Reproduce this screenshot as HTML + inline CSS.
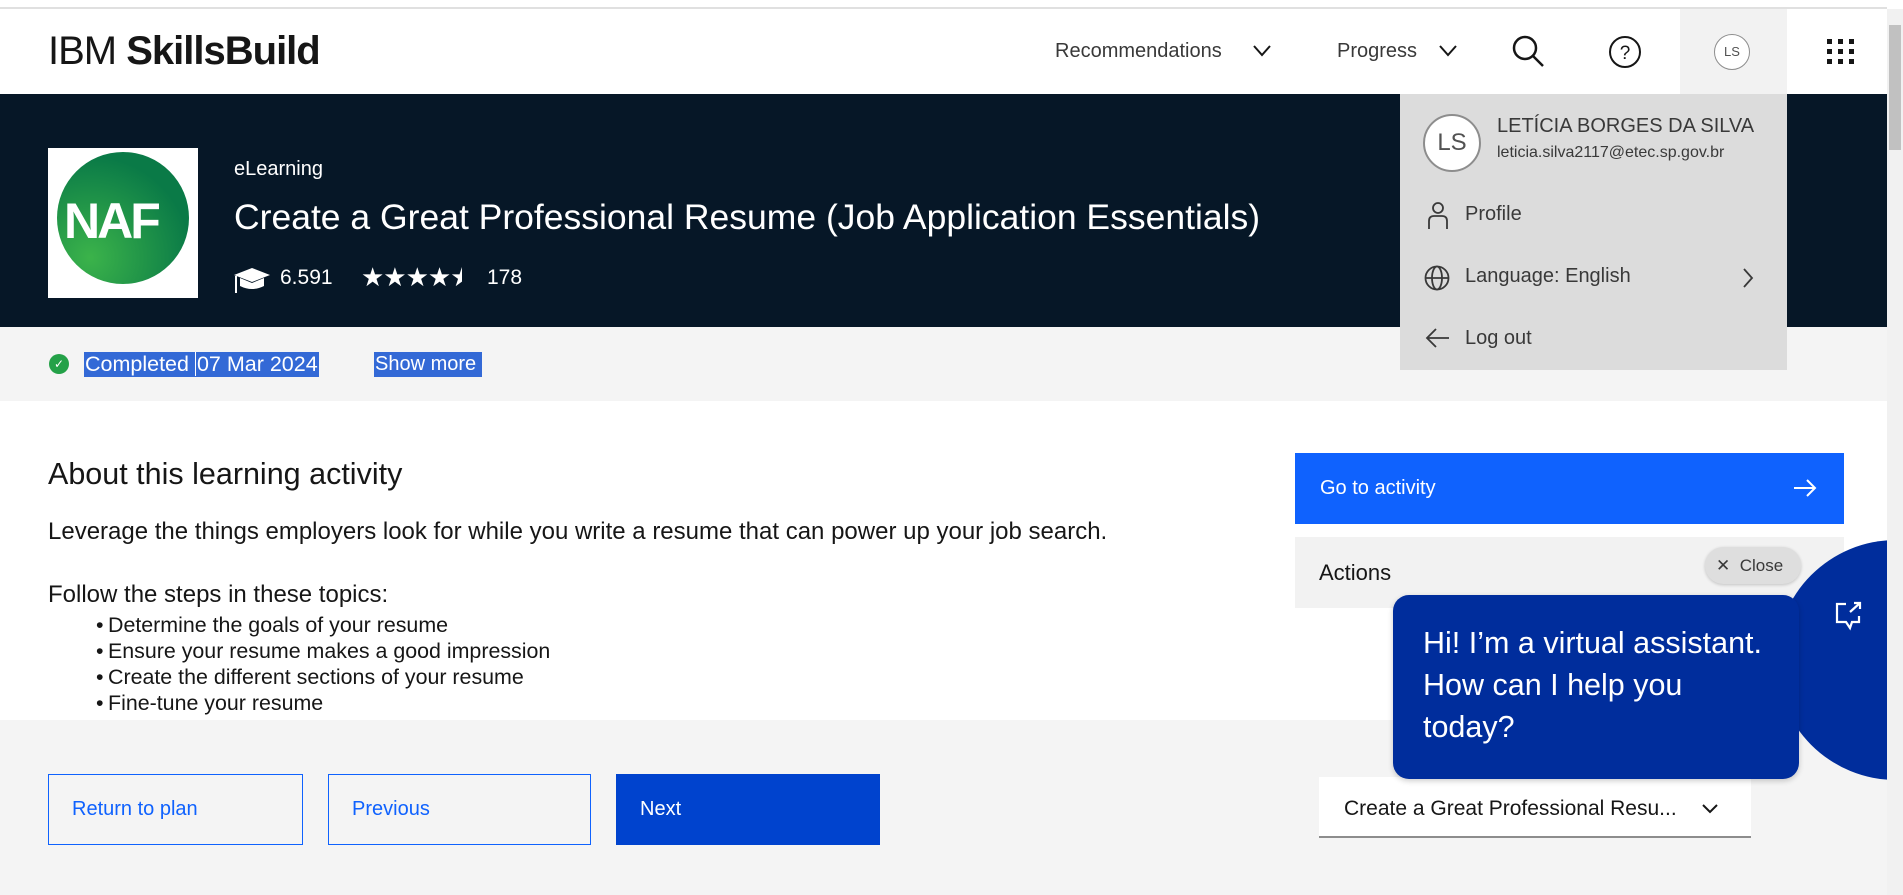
<!DOCTYPE html>
<html><head><meta charset="utf-8"><style>
*{margin:0;padding:0;box-sizing:border-box}
body{width:1903px;height:895px;overflow:hidden;position:relative;background:#fff;font-family:"Liberation Sans",Arial,sans-serif;color:#161616}
.a{position:absolute}
.t{position:absolute;white-space:nowrap}
li{list-style:none;position:relative;padding-left:12px}
li:before{content:"•";position:absolute;left:0}
</style></head><body>
<div class="a" style="left:0;top:0;width:1887px;height:9px;background:#fff;border-bottom:2px solid #e0e0e0"></div>
<!-- header -->
<div class="a" style="left:0;top:9px;width:1887px;height:85px;background:#fff"></div>
<div class="t" style="left:48px;top:29px;font-size:40px;letter-spacing:-1px"><span style="font-weight:400">IBM </span><b>SkillsBuild</b></div>
<div class="t" style="left:1055px;top:40px;font-size:20px;color:#393939">Recommendations</div>
<svg class="a" style="left:1252px;top:44px" width="20" height="14" viewBox="0 0 20 14"><path d="M2 2 L10 11 L18 2" fill="none" stroke="#161616" stroke-width="2"/></svg>
<div class="t" style="left:1337px;top:40px;font-size:20px;color:#393939">Progress</div>
<svg class="a" style="left:1438px;top:44px" width="20" height="14" viewBox="0 0 20 14"><path d="M2 2 L10 11 L18 2" fill="none" stroke="#161616" stroke-width="2"/></svg>
<svg class="a" style="left:1512px;top:35px" width="34" height="34" viewBox="0 0 34 34"><circle cx="13" cy="13" r="11" fill="none" stroke="#161616" stroke-width="2.5"/><path d="M21 21 L31 31" stroke="#161616" stroke-width="2.5"/></svg>
<svg class="a" style="left:1608px;top:35px" width="34" height="34" viewBox="0 0 34 34"><circle cx="17" cy="17" r="15" fill="none" stroke="#161616" stroke-width="2"/><text x="17" y="24" font-size="19" text-anchor="middle" font-family="Liberation Sans" fill="#161616">?</text></svg>
<div class="a" style="left:1680px;top:9px;width:107px;height:85px;background:#f2f2f2"></div>
<div class="a" style="left:1714px;top:34px;width:36px;height:36px;border:1.5px solid #8d8d8d;border-radius:50%;background:#fff;font-size:13px;color:#525252;text-align:center;line-height:33px">LS</div>
<svg class="a" style="left:1825px;top:37px" width="32" height="30" viewBox="0 0 32 30"><g fill="#161616"><rect x="2" y="2" width="5" height="5"/><rect x="13" y="2" width="5" height="5"/><rect x="24" y="2" width="5" height="5"/><rect x="2" y="12" width="5" height="5"/><rect x="13" y="12" width="5" height="5"/><rect x="24" y="12" width="5" height="5"/><rect x="2" y="22" width="5" height="5"/><rect x="13" y="22" width="5" height="5"/><rect x="24" y="22" width="5" height="5"/></g></svg>
<!-- hero -->
<div class="a" style="left:0;top:94px;width:1887px;height:233px;background:#061727"></div>
<div class="a" style="left:48px;top:148px;width:150px;height:150px;background:#fff"></div>
<div class="a" style="left:57px;top:152px;width:132px;height:132px;border-radius:50%;background:radial-gradient(circle at 25% 80%,#3bb34a,#0a7a47 70%)"></div>
<div class="t" style="left:64px;top:192px;font-size:50px;font-weight:bold;color:#fff;letter-spacing:-3px">NAF</div>
<div class="t" style="left:234px;top:158px;font-size:20px;color:#fff">eLearning</div>
<div class="t" style="left:234px;top:197px;font-size:35.5px;color:#fff">Create a Great Professional Resume (Job Application Essentials)</div>
<svg class="a" style="left:232px;top:265px" width="40" height="30" viewBox="0 0 40 30"><path d="M2 10 L20 3 L38 10 L20 17 Z" fill="#fff"/><path d="M8 13 V21 Q20 27 32 21 V13 L20 18 Z" fill="#fff"/><path d="M4 11 V28" stroke="#fff" stroke-width="2"/></svg>
<div class="t" style="left:280px;top:266px;font-size:21px;color:#fff">6.591</div>
<div class="t" style="left:361px;top:262px;font-size:26px;color:#fff;letter-spacing:-1px">★★★★<span style="display:inline-block;width:12px;overflow:hidden;vertical-align:top">★</span></div>
<div class="t" style="left:487px;top:266px;font-size:21px;color:#fff">178</div>
<!-- status strip -->
<div class="a" style="left:0;top:327px;width:1887px;height:74px;background:#f4f4f4"></div>
<div class="a" style="left:49px;top:354px;width:20px;height:20px;border-radius:50%;background:#24a148;color:#fff;font-size:12px;text-align:center;line-height:20px">✓</div>
<div class="t" style="left:84px;top:352px;height:25px;background:#3369d6;color:#fff;font-size:21.5px;line-height:25px;padding:0 1px">Completed <span style="border-left:1px solid #fff;padding-left:1px">07 Mar 2024</span></div>
<div class="t" style="left:374px;top:352px;width:108px;height:25px;background:#3369d6;color:#fff;font-size:20px;line-height:25px;padding-left:1px">Show more</div>
<!-- content -->
<div class="t" style="left:48px;top:457px;font-size:30.5px">About this learning activity</div>
<div class="t" style="left:48px;top:518px;font-size:24px">Leverage the things employers look for while you write a resume that can power up your job search.</div>
<div class="t" style="left:48px;top:581px;font-size:24px">Follow the steps in these topics:</div>
<ul class="a" style="left:96px;top:612px;font-size:21.4px;line-height:26px;white-space:nowrap">
<li>Determine the goals of your resume</li>
<li>Ensure your resume makes a good impression</li>
<li>Create the different sections of your resume</li>
<li>Fine-tune your resume</li>
</ul>
<div class="a" style="left:1295px;top:453px;width:549px;height:71px;background:#0f62fe"></div>
<div class="t" style="left:1320px;top:477px;font-size:20px;color:#fff">Go to activity</div>
<svg class="a" style="left:1792px;top:478px" width="26" height="20" viewBox="0 0 26 20"><path d="M2 10 H23 M15 2 L23 10 L15 18" fill="none" stroke="#fff" stroke-width="2"/></svg>
<div class="a" style="left:1295px;top:537px;width:549px;height:71px;background:#f2f2f2"></div>
<div class="t" style="left:1319px;top:560px;font-size:22px">Actions</div>
<!-- bottom -->
<div class="a" style="left:0;top:720px;width:1887px;height:175px;background:#f4f4f4"></div>
<div class="a" style="left:48px;top:774px;width:255px;height:71px;border:1px solid #0f62fe;color:#0f62fe;font-size:20px;line-height:69px;padding-left:23px">Return to plan</div>
<div class="a" style="left:328px;top:774px;width:263px;height:71px;border:1px solid #0f62fe;color:#0f62fe;font-size:20px;line-height:69px;padding-left:23px">Previous</div>
<div class="a" style="left:616px;top:774px;width:264px;height:71px;background:#0043ce;color:#fff;font-size:20px;line-height:71px;padding-left:24px">Next</div>
<div class="a" style="left:1319px;top:777px;width:432px;height:61px;background:#fff;border-bottom:2px solid #8d8d8d"></div>
<div class="t" style="left:1344px;top:797px;font-size:21px">Create a Great Professional Resu...</div>
<svg class="a" style="left:1701px;top:803px" width="18" height="12" viewBox="0 0 18 12"><path d="M2 2 L9 9 L16 2" fill="none" stroke="#161616" stroke-width="2"/></svg>
<!-- chat -->
<div class="a" style="left:1776px;top:540px;width:240px;height:240px;border-radius:50%;background:#002d9c;clip-path:inset(0 129px 0 0)"></div>
<svg class="a" style="left:1834px;top:600px" width="30" height="32" viewBox="0 0 30 32"><path d="M12 4 H3 V22 H12 L16 28 L18 22 H25 V16" fill="none" stroke="#fff" stroke-width="2.2"/><path d="M16 12 L26 3 M20 3 H26 V9" fill="none" stroke="#fff" stroke-width="2.2"/></svg>
<div class="a" style="left:1393px;top:595px;width:406px;height:184px;background:#002d9c;border-radius:16px;box-shadow:0 2px 6px rgba(0,0,0,.2)"></div>
<div class="a" style="left:1423px;top:622px;font-size:30.5px;line-height:42px;color:#fff;white-space:nowrap">Hi! I’m a virtual assistant.<br>How can I help you<br>today?</div>
<div class="a" style="left:1705px;top:547px;width:96px;height:37px;background:#dedede;border-radius:19px;box-shadow:0 1px 3px rgba(0,0,0,.2);font-size:17px;color:#393939;line-height:37px;padding-left:11px">✕&nbsp; Close</div>
<!-- dropdown -->
<div class="a" style="left:1400px;top:94px;width:387px;height:276px;background:#dcdcdc"></div>
<div class="a" style="left:1423px;top:114px;width:58px;height:58px;border:2px solid #8d8d8d;border-radius:50%;background:#fff;font-size:24px;color:#525252;text-align:center;line-height:54px">LS</div>
<div class="t" style="left:1497px;top:115px;font-size:20px;color:#393939">LETÍCIA BORGES DA SILVA</div>
<div class="t" style="left:1497px;top:144px;font-size:16px;color:#393939">leticia.silva2117@etec.sp.gov.br</div>
<svg class="a" style="left:1427px;top:201px" width="22" height="30" viewBox="0 0 22 30"><circle cx="11" cy="7" r="5" fill="none" stroke="#393939" stroke-width="1.8"/><path d="M2 28 V20 Q2 15 7 15 H15 Q20 15 20 20 V28" fill="none" stroke="#393939" stroke-width="1.8"/></svg>
<div class="t" style="left:1465px;top:203px;font-size:20px;color:#393939">Profile</div>
<svg class="a" style="left:1424px;top:265px" width="26" height="26" viewBox="0 0 26 26"><g fill="none" stroke="#393939" stroke-width="1.8"><circle cx="13" cy="13" r="11.5"/><ellipse cx="13" cy="13" rx="5" ry="11.5"/><path d="M1.5 13 H24.5"/></g></svg>
<div class="t" style="left:1465px;top:265px;font-size:20px;color:#393939">Language: English</div>
<svg class="a" style="left:1741px;top:267px" width="14" height="22" viewBox="0 0 14 22"><path d="M3 2 L11 11 L3 20" fill="none" stroke="#393939" stroke-width="1.8"/></svg>
<svg class="a" style="left:1425px;top:327px" width="26" height="22" viewBox="0 0 26 22"><path d="M24 11 H3 M11 2 L2 11 L11 20" fill="none" stroke="#393939" stroke-width="1.8"/></svg>
<div class="t" style="left:1465px;top:327px;font-size:20px;color:#393939">Log out</div>
<!-- scrollbar -->
<div class="a" style="left:1887px;top:9px;width:16px;height:886px;background:#f1f1f1"></div>
<div class="a" style="left:1889px;top:25px;width:12px;height:125px;background:#c1c1c1"></div>
</body></html>
